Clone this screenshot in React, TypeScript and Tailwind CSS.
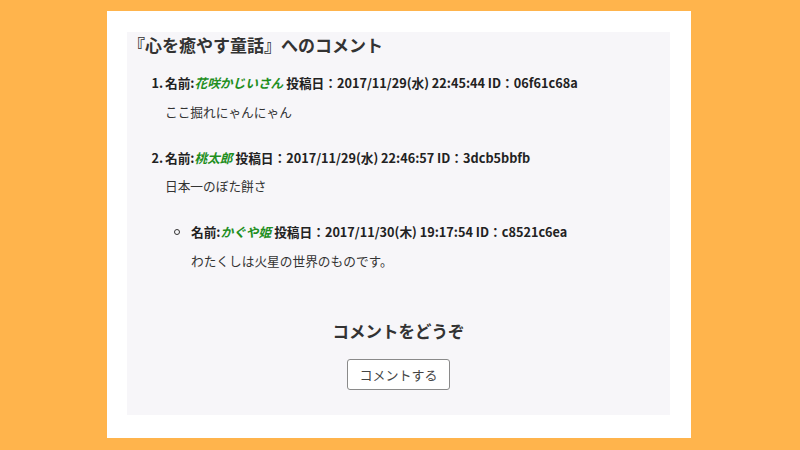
const font = { fontFamily: '"Noto Sans CJK JP", "Noto Sans", sans-serif' };

type Comment = {
  name: string;
  date: string;
  id: string;
  body: string;
};

function Header({ c }: { c: Comment }) {
  return (
    <p className="h-5 leading-5 font-bold text-[12.7px] text-[#222] whitespace-nowrap">
      名前:<span className="italic text-[#1f8f1f]">{c.name}</span> 投稿日：{c.date} ID：{c.id}
    </p>
  );
}

export default function App() {
  const first: Comment = {
    name: '花咲かじいさん',
    date: '2017/11/29(水) 22:45:44',
    id: '06f61c68a',
    body: 'ここ掘れにゃんにゃん',
  };
  const second: Comment = {
    name: '桃太郎',
    date: '2017/11/29(水) 22:46:57',
    id: '3dcb5bbfb',
    body: '日本一のぼた餅さ',
  };
  const reply: Comment = {
    name: 'かぐや姫',
    date: '2017/11/30(木) 19:17:54',
    id: 'c8521c6ea',
    body: 'わたくしは火星の世界のものです。',
  };

  return (
    <div className="w-[800px] h-[450px] bg-[#ffb44c] pt-[11px] pl-[107px]" style={font}>
      <div className="w-[584px] h-[427px] bg-white pt-[21px] pl-[20px]">
        <div className="w-[543px] h-[383px] bg-[#f7f6f9] flex flex-col">
          {/* Title */}
          <h2 className="h-[26px] leading-[26px] text-[17px] font-bold text-[#333] pl-[1px]">
            『心を癒やす童話』へのコメント
          </h2>

          {/* Comment 1 */}
          <div className="mt-[15px] flex">
            <span className="w-[38px] text-right pr-[2px] h-5 leading-5 font-bold text-[12.7px] text-[#222]">1.</span>
            <div>
              <Header c={first} />
              <p className="mt-[9px] h-5 leading-5 text-[12.7px] text-[#333]">{first.body}</p>
            </div>
          </div>

          {/* Comment 2 */}
          <div className="mt-[26px] flex">
            <span className="w-[38px] text-right pr-[2px] h-5 leading-5 font-bold text-[12.7px] text-[#222]">2.</span>
            <div>
              <Header c={second} />
              <p className="mt-[8px] h-5 leading-5 text-[12.7px] text-[#333]">{second.body}</p>

              {/* Reply */}
              <div className="mt-[26px] flex">
                <span className="w-[26px] h-5 flex items-center pl-[9px]">
                  <span className="w-[6px] h-[6px] rounded-full border border-[#333]" />
                </span>
                <div>
                  <Header c={reply} />
                  <p className="mt-[9px] h-5 leading-5 text-[12.7px] text-[#333]">{reply.body}</p>
                </div>
              </div>
            </div>
          </div>

          {/* Form */}
          <h3 className="mt-[48px] h-6 leading-6 text-center text-[16.5px] font-bold text-[#333]">
            コメントをどうぞ
          </h3>
          <div className="mt-[16px] flex justify-center">
            <button className="h-[31px] w-[103px] bg-white border border-[#8a8a8a] rounded-[3px] text-[13px] text-[#444]">
              コメントする
            </button>
          </div>
        </div>
      </div>
    </div>
  );
}
